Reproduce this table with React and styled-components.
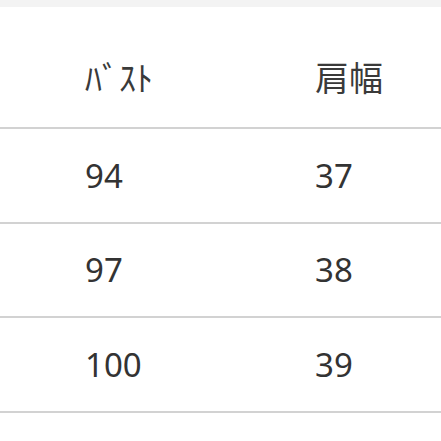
import React from 'react';
import styled, { createGlobalStyle } from 'styled-components';

const GlobalStyle = createGlobalStyle`
  html, body {
    margin: 0;
    padding: 0;
    background: #ffffff;
  }
  body {
    font-family: "Noto Sans", "Noto Sans CJK JP", sans-serif;
    color: #333333;
  }
`;

const Page = styled.div`
  width: 441px;
  height: 441px;
  overflow: hidden;
  background: #ffffff;
`;

const TopBand = styled.div`
  height: 7px;
  background: #f3f3f3;
`;

const Table = styled.div`
  display: flex;
  flex-direction: column;
`;

const Row = styled.div`
  display: grid;
  grid-template-columns: 230px 1fr;
  align-items: center;
  height: ${({ head }) => (head ? '122px' : '94.5px')};
  padding-top: ${({ head }) => (head ? '20px' : '0')};
  box-sizing: border-box;
  border-bottom: 2px solid #d2d2d2;
`;

const Cell = styled.div`
  padding-left: 85px;
  font-size: ${({ head }) => (head ? '34px' : '33px')};
  line-height: 1;
  font-family: ${({ head }) =>
    head ? '"Noto Sans CJK JP", sans-serif' : '"Noto Sans", sans-serif'};
  font-weight: 400;
  color: ${({ head }) => (head ? '#3a3a3a' : '#333333')};
`;

const BottomLine = styled.div`
  margin-top: 28px;
  border-top: 1px solid #eaeaea;
`;

const rows = [
  ['94', '37'],
  ['97', '38'],
  ['100', '39'],
];

export default function App() {
  return (
    <Page>
      <GlobalStyle />
      <TopBand />
      <Table>
        <Row head>
          <Cell head>ﾊﾞｽﾄ</Cell>
          <Cell head>肩幅</Cell>
        </Row>
        {rows.map(([bust, shoulder]) => (
          <Row key={bust}>
            <Cell>{bust}</Cell>
            <Cell>{shoulder}</Cell>
          </Row>
        ))}
      </Table>
      <BottomLine />
    </Page>
  );
}
